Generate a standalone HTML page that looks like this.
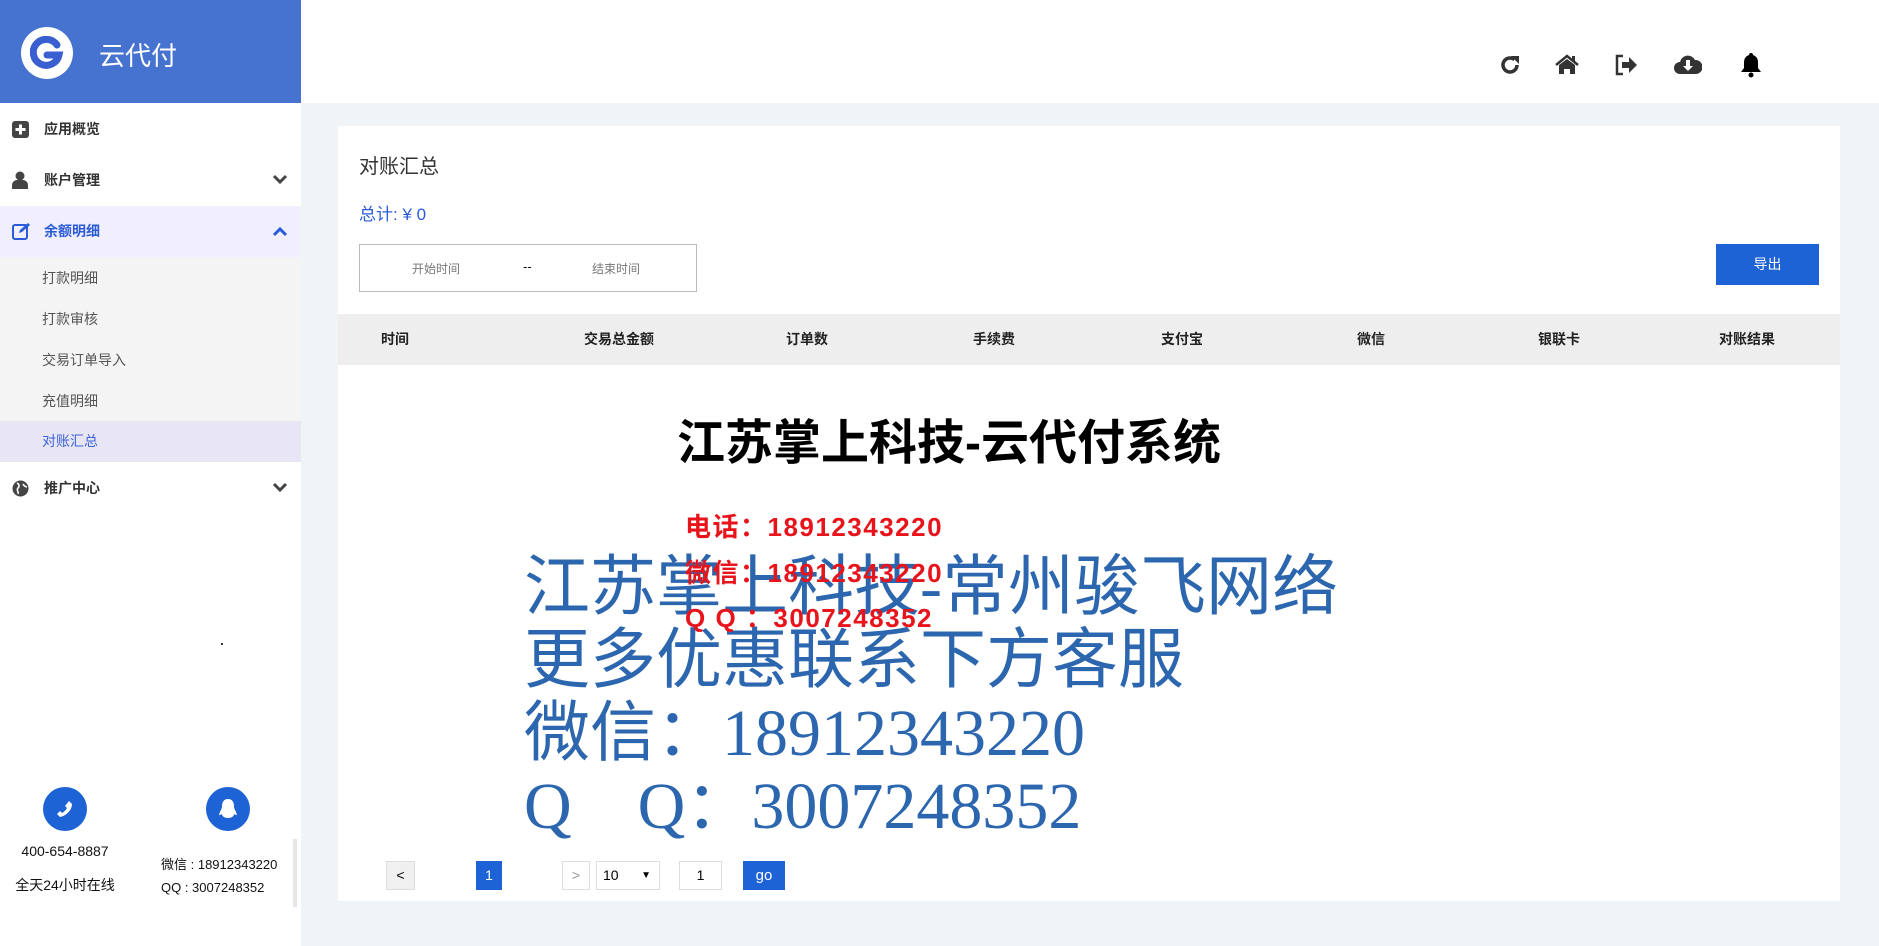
<!DOCTYPE html>
<html><head><meta charset="utf-8"><style>
*{margin:0;padding:0;box-sizing:border-box}
body{width:1879px;height:946px;overflow:hidden;background:#f1f4f7;font-family:"Liberation Sans","Noto Sans CJK SC",sans-serif;position:relative}
.abs{position:absolute}
#side{left:0;top:0;width:301px;height:946px;background:#fff}
#logo{left:0;top:0;width:301px;height:103px;background:#4672d0}
#topbar{left:301px;top:0;width:1578px;height:103px;background:#fff}
.mi{position:absolute;left:0;width:301px;height:50px;line-height:50px;font-size:14px;font-weight:bold;color:#333}
.mi .t{position:absolute;left:44px}
.mi svg{position:absolute}
.sub{position:absolute;left:0;width:301px;height:41px;line-height:41px;font-size:14px;color:#555;padding-left:42px}
.th{position:absolute;top:314px;height:51px;line-height:51px;font-size:14px;font-weight:bold;color:#222;transform:translateX(-50%)}
.wm{position:absolute;left:524px;font-family:"Liberation Serif","Noto Sans CJK SC",serif;font-size:66px;color:#1a5aa8;line-height:73px;white-space:nowrap;opacity:.92}
.red{position:absolute;left:685px;font-size:26px;font-weight:bold;color:#e8141c;white-space:nowrap;letter-spacing:1.5px;line-height:30px}
.pg{position:absolute;top:861px;height:29px;line-height:27px;font-size:14px;text-align:center;border:1px solid #ddd;background:#fff}
</style></head><body>
<div id="side" class="abs"></div>
<div id="logo" class="abs">
 <div class="abs" style="left:21px;top:27px;width:52px;height:52px;border-radius:50%;background:#fff"></div>
 <svg class="abs" style="left:30px;top:36px" width="34" height="34" viewBox="0 0 34 34"><path d="M27 9A13 13 0 1 0 29 19H17" fill="none" stroke="#3a5fd0" stroke-width="7" stroke-linecap="round"/></svg>
 <div class="abs" style="left:99px;top:36px;color:#fff;font-size:26px">云代付</div>
</div>
<div id="topbar" class="abs"></div>
<svg class="abs" style="left:1498px;top:53px" width="24" height="24" viewBox="0 0 24 24"><path d="M19 12a7 7 0 1 1-2.5-5.4" fill="none" stroke="#333" stroke-width="3.5"/><path d="M13 3h8v8z" fill="#333"/></svg>
<svg class="abs" style="left:1555px;top:53px" width="24" height="24" viewBox="0 0 24 24"><path d="M1 12L12 3l11 9" fill="none" stroke="#333" stroke-width="2.5"/><path d="M4 12l8-6 8 6v9h-5v-5h-6v5H4z" fill="#333"/><rect x="17" y="3" width="3" height="5" fill="#333"/></svg>
<svg class="abs" style="left:1614px;top:53px" width="24" height="24" viewBox="0 0 24 24"><path d="M9 3H3v18h6" fill="none" stroke="#333" stroke-width="2.5"/><path d="M8 9h7V4l8 8-8 8v-5H8z" fill="#333"/></svg>
<svg class="abs" style="left:1674px;top:52px" width="28" height="24" viewBox="0 0 28 24"><path d="M6 22a6 6 0 0 1 0-12 8 8 0 0 1 15-2 6 6 0 0 1 1 14z" fill="#333"/><path d="M12 8h4v6h3l-5 5-5-5h3z" fill="#fff"/></svg>
<svg class="abs" style="left:1739px;top:51px" width="24" height="27" viewBox="0 0 24 27"><path d="M12 2a2 2 0 0 1 2 2 7 7 0 0 1 5 7v6l3 4H2l3-4v-6a7 7 0 0 1 5-7 2 2 0 0 1 2-2z" fill="#000"/><circle cx="12" cy="24" r="2.5" fill="#000"/></svg>

<div class="mi" style="top:104px"><svg style="left:12px;top:17px" width="17" height="17" viewBox="0 0 17 17"><rect width="17" height="17" rx="3" fill="#444"/><path d="M8.5 3.5v10M3.5 8.5h10" stroke="#fff" stroke-width="3"/></svg><span class="t">应用概览</span></div>
<div class="mi" style="top:155px"><svg style="left:12px;top:16px" width="16" height="18" viewBox="0 0 16 18"><circle cx="8" cy="5" r="4.5" fill="#444"/><path d="M0 18v-4a5 5 0 0 1 5-5h6a5 5 0 0 1 5 5v4z" fill="#444"/></svg><span class="t">账户管理</span><svg style="left:272px;top:19px" width="16" height="11" viewBox="0 0 16 11"><path d="M2 2l6 6 6-6" fill="none" stroke="#444" stroke-width="3"/></svg></div>
<div class="mi" style="top:206px;height:51px;background:#f1effd;color:#2a5bd7"><svg style="left:12px;top:16px" width="19" height="18" viewBox="0 0 19 18"><rect x="1" y="3" width="14" height="14" rx="2" fill="none" stroke="#2a5bd7" stroke-width="2"/><path d="M7 11l1-3 8-7 2 2-8 7z" fill="#2a5bd7"/></svg><span class="t">余额明细</span><svg style="left:272px;top:20px" width="16" height="11" viewBox="0 0 16 11"><path d="M2 9l6-6 6 6" fill="none" stroke="#2a5bd7" stroke-width="3"/></svg></div>
<div class="abs" style="left:0;top:257px;width:301px;height:164px;background:#f4f4f4"></div>
<div class="sub" style="top:258px">打款明细</div>
<div class="sub" style="top:299px">打款审核</div>
<div class="sub" style="top:340px">交易订单导入</div>
<div class="sub" style="top:381px">充值明细</div>
<div class="sub" style="top:421px;background:#e8e6f4;color:#3d63d6">对账汇总</div>
<div class="mi" style="top:463px"><svg style="left:12px;top:17px" width="17" height="17" viewBox="0 0 17 17"><circle cx="8.5" cy="8.5" r="8" fill="#444"/><path d="M5 3c2 1 3 3 1 5s1 4 0 6M11 4c1 2 3 3 4 3" fill="none" stroke="#fff" stroke-width="1.6"/></svg><span class="t">推广中心</span><svg style="left:272px;top:19px" width="16" height="11" viewBox="0 0 16 11"><path d="M2 2l6 6 6-6" fill="none" stroke="#444" stroke-width="3"/></svg></div>
<div class="abs" style="left:221px;top:643px;width:2px;height:2px;background:#333"></div>

<div class="abs" style="left:43px;top:787px;width:44px;height:44px;border-radius:50%;background:#1e63d6"></div>
<svg class="abs" style="left:55px;top:799px" width="20" height="20" viewBox="0 0 20 20"><path d="M14 2l3 3c0 6-6 12-12 13l-3-3 3-3 2 2c2-1 4-3 5-5l-2-2z" fill="#fff"/></svg>
<div class="abs" style="left:206px;top:787px;width:44px;height:44px;border-radius:50%;background:#1e63d6"></div>
<svg class="abs" style="left:217px;top:797px" width="22" height="24" viewBox="0 0 22 24"><path d="M11 2c4 0 6 3 6 7 0 3 2 5 3 9-2 0-3-1-3-1 0 2-2 4-6 4s-6-2-6-4c0 0-1 1-3 1 1-4 3-6 3-9 0-4 2-7 6-7z" fill="#fff"/></svg>
<div class="abs" style="left:0;top:843px;width:130px;text-align:center;font-size:14px;color:#111">400-654-8887</div>
<div class="abs" style="left:0;top:875px;width:130px;text-align:center;font-size:14px;color:#111">全天24小时在线</div>
<div class="abs" style="left:161px;top:854px;font-size:13px;color:#111">微信 : 18912343220</div>
<div class="abs" style="left:161px;top:880px;font-size:13px;color:#111">QQ : 3007248352</div>
<div class="abs" style="left:293px;top:839px;width:4px;height:68px;background:#e6e6e6"></div>

<div class="abs" style="left:338px;top:126px;width:1502px;height:775px;background:#fff"></div>
<div class="abs" style="left:359px;top:150px;font-size:20px;color:#333">对账汇总</div>
<div class="abs" style="left:359px;top:200px;font-size:17px;color:#2a5bd7">总计: ¥ 0</div>
<div class="abs" style="left:359px;top:244px;width:338px;height:48px;border:1px solid #bbb"></div>
<div class="abs" style="left:412px;top:260px;font-size:12px;color:#777">开始时间</div>
<div class="abs" style="left:523px;top:259px;font-size:13px;color:#111">--</div>
<div class="abs" style="left:592px;top:260px;font-size:12px;color:#777">结束时间</div>
<div class="abs" style="left:1716px;top:244px;width:103px;height:41px;background:#1e63d6;color:#fff;font-size:14px;line-height:41px;text-align:center">导出</div>
<div class="abs" style="left:338px;top:314px;width:1502px;height:51px;background:#eeeeee"></div>
<div class="th" style="left:395px">时间</div>
<div class="th" style="left:619px">交易总金额</div>
<div class="th" style="left:807px">订单数</div>
<div class="th" style="left:994px">手续费</div>
<div class="th" style="left:1182px">支付宝</div>
<div class="th" style="left:1371px">微信</div>
<div class="th" style="left:1559px">银联卡</div>
<div class="th" style="left:1747px">对账结果</div>

<div class="abs" style="left:677px;top:403px;font-size:48px;font-weight:bold;color:#000;white-space:nowrap">江苏掌上科技-云代付系统</div>
<div class="wm" style="top:551px">江苏掌上科技-常州骏飞网络</div>
<div class="wm" style="top:624px">更多优惠联系下方客服</div>
<div class="wm" style="top:697px">微信：18912343220</div>
<div class="wm" style="top:770px">Q　Q：3007248352</div>
<div class="red" style="top:512px">电话：18912343220</div>
<div class="red" style="top:558px">微信：18912343220</div>
<div class="red" style="top:603px">Q Q ：3007248352</div>

<div class="pg" style="left:386px;width:29px;background:#f0f0f0">&lt;</div>
<div class="pg" style="left:476px;width:26px;background:#1e63d6;color:#fff;border-color:#1e63d6">1</div>
<div class="pg" style="left:562px;width:28px;color:#999">&gt;</div>
<div class="pg" style="left:596px;width:64px;text-align:left;padding-left:6px">10<span style="position:absolute;right:8px;font-size:10px">▼</span></div>
<div class="pg" style="left:679px;width:43px">1</div>
<div class="pg" style="left:743px;width:42px;background:#1e63d6;color:#fff;border-color:#1e63d6;font-size:15px">go</div>
</body></html>
